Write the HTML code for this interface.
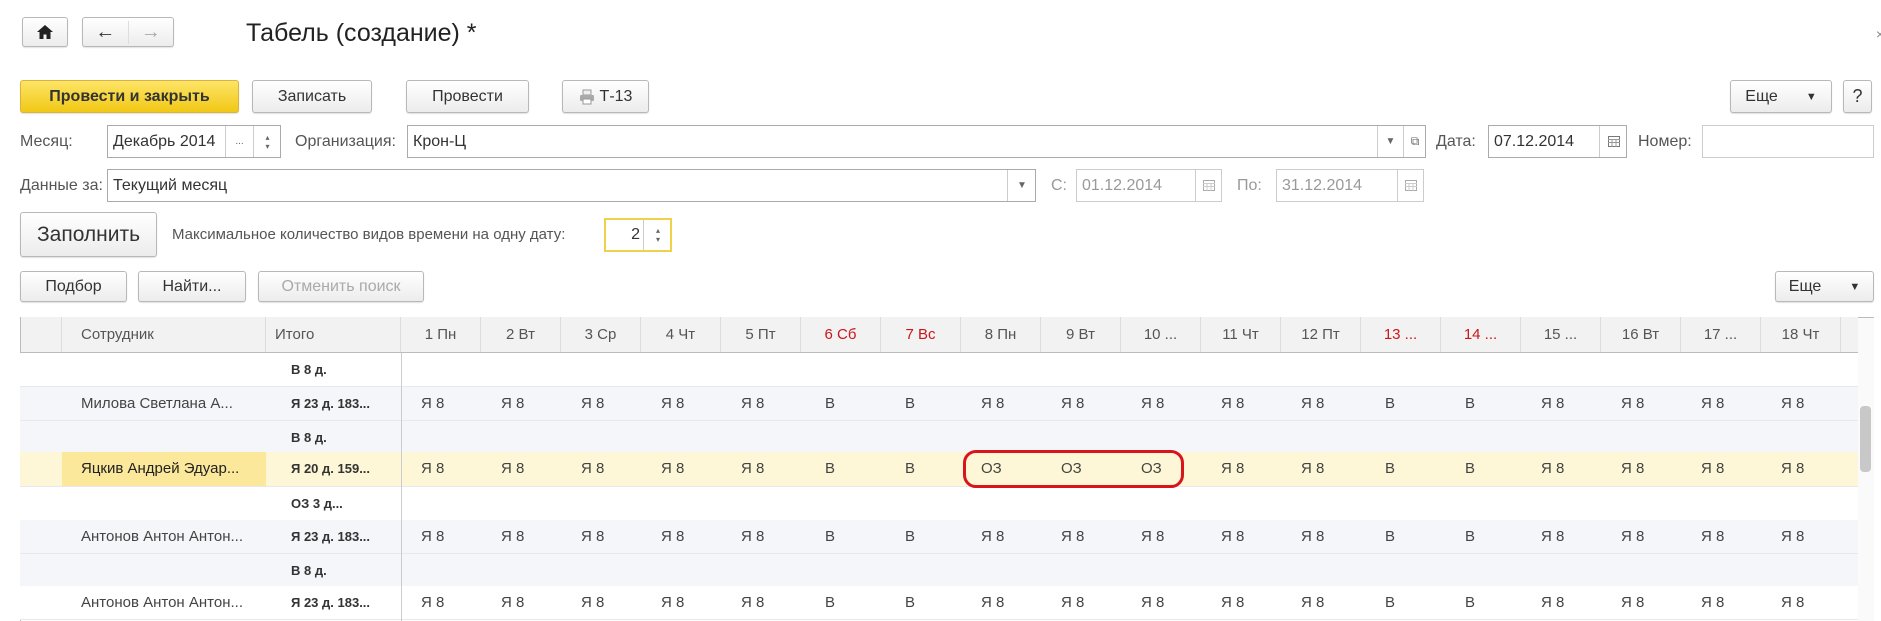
<!DOCTYPE html>
<html><head><meta charset="utf-8"><style>
*{box-sizing:border-box;margin:0;padding:0}
body{width:1881px;height:621px;overflow:hidden;background:#fff;font-family:"Liberation Sans",sans-serif;color:#333;position:relative;font-size:15px}
.a{position:absolute}
.btn{position:absolute;border:1px solid #b8b8b8;border-radius:3px;background:linear-gradient(#fff,#ececec);display:flex;align-items:center;justify-content:center;font-size:16px;color:#333;box-shadow:0 1px 1px rgba(0,0,0,.12)}
.inp{position:absolute;border:1px solid #aaa;background:#fff;font-size:16px;display:flex;align-items:center;padding-left:5px;color:#333}
.dis{border-color:#ccc;color:#999}
.lbl{position:absolute;font-size:16px;color:#555;height:33px;line-height:33px}
.sub{position:absolute;top:0;bottom:0;border-left:1px solid #ccc;display:flex;align-items:center;justify-content:center;font-size:10px;color:#666}
.row{position:absolute;left:20px;width:1838px;height:34px;border-bottom:1px solid #e6e8ee}
.row span{position:absolute;top:0;line-height:33px;font-size:15px;color:#444}
.hd{position:absolute;top:317px;height:36px;line-height:36px;font-size:15px;color:#555;background:#f2f2f2;border-right:1px solid #dcdcdc;text-align:center}
</style></head><body>
<div class="btn" style="left:22px;top:17px;width:46px;height:30px"><svg width="18" height="16" viewBox="0 0 18 16"><path d="M9 1 L1 8 L3.5 8 L3.5 15 L7.5 15 L7.5 10.5 L10.5 10.5 L10.5 15 L14.5 15 L14.5 8 L17 8 Z" fill="#222"/></svg></div>
<div class="btn" style="left:82px;top:17px;width:92px;height:30px;justify-content:flex-start"><span style="width:45px;text-align:center;font-size:20px;font-weight:bold">&larr;</span><span style="width:46px;text-align:center;font-size:20px;color:#aaa;border-left:1px solid #ddd">&rarr;</span></div>
<div class="a" style="left:246px;top:19px;font-size:25px;color:#222">Табель (создание) *</div>
<div class="a" style="left:1876px;top:26px;font-size:14px;color:#888">×</div>

<div class="btn" style="left:20px;top:80px;width:219px;height:33px;background:linear-gradient(#fde467,#f1c815);border-color:#d9b33a;font-weight:bold;color:#333">Провести и закрыть</div>
<div class="btn" style="left:252px;top:80px;width:120px;height:33px">Записать</div>
<div class="btn" style="left:406px;top:80px;width:123px;height:33px">Провести</div>
<div class="btn" style="left:562px;top:80px;width:87px;height:33px"><svg width="16" height="16" viewBox="0 0 16 16" style="margin-right:5px"><rect x="4" y="1" width="8" height="5" fill="#eee" stroke="#999"/><rect x="1" y="6" width="14" height="6" rx="1" fill="#aaa"/><rect x="4" y="10" width="8" height="5" fill="#fff" stroke="#999"/></svg>Т-13</div>
<div class="btn" style="left:1730px;top:80px;width:102px;height:33px">Еще<span style="font-size:11px;margin-left:28px">&#9660;</span></div>
<div class="btn" style="left:1843px;top:80px;width:29px;height:33px;font-size:18px">?</div>

<div class="lbl" style="left:20px;top:125px">Месяц:</div>
<div class="inp" style="left:107px;top:125px;width:174px;height:33px">Декабрь 2014<div class="sub" style="left:117px;width:28px;">...</div><div class="sub" style="left:145px;width:28px;flex-direction:column;font-size:8px">▴<br>▾</div></div>
<div class="lbl" style="left:295px;top:125px">Организация:</div>
<div class="inp" style="left:407px;top:125px;width:1019px;height:33px">Крон-Ц<div class="sub" style="left:969px;width:26px">&#9660;</div><div class="sub" style="left:995px;width:23px;font-size:12px">&#10697;</div></div>
<div class="lbl" style="left:1436px;top:125px">Дата:</div>
<div class="inp" style="left:1488px;top:125px;width:139px;height:33px">07.12.2014<div class="sub" style="left:110px;width:28px"><svg width="12" height="11"><rect x="0.5" y="0.5" width="11" height="10" fill="#fff" stroke="#777"/><path d="M0 3.5H12M0 6.5H12M4 3V11M8 3V11" stroke="#999"/></svg></div></div>
<div class="lbl" style="left:1638px;top:125px">Номер:</div>
<div class="inp" style="left:1702px;top:125px;width:172px;height:33px;border-color:#ccc"></div>

<div class="lbl" style="left:20px;top:169px">Данные за:</div>
<div class="inp" style="left:107px;top:169px;width:929px;height:33px">Текущий месяц<div class="sub" style="left:899px;width:29px">&#9660;</div></div>
<div class="lbl" style="left:1051px;top:169px;color:#999">С:</div>
<div class="inp dis" style="left:1076px;top:169px;width:146px;height:33px">01.12.2014<div class="sub" style="left:118px;width:27px"><svg width="12" height="11"><rect x="0.5" y="0.5" width="11" height="10" fill="#fff" stroke="#aaa"/><path d="M0 3.5H12M0 6.5H12M4 3V11M8 3V11" stroke="#ccc"/></svg></div></div>
<div class="lbl" style="left:1237px;top:169px;color:#999">По:</div>
<div class="inp dis" style="left:1276px;top:169px;width:148px;height:33px">31.12.2014<div class="sub" style="left:120px;width:27px"><svg width="12" height="11"><rect x="0.5" y="0.5" width="11" height="10" fill="#fff" stroke="#aaa"/><path d="M0 3.5H12M0 6.5H12M4 3V11M8 3V11" stroke="#ccc"/></svg></div></div>

<div class="btn" style="left:20px;top:212px;width:137px;height:45px;font-size:21px">Заполнить</div>
<div class="lbl" style="left:172px;top:218px;font-size:15px;height:34px;line-height:34px">Максимальное количество видов времени на одну дату:</div>
<div class="inp" style="left:604px;top:218px;width:68px;height:34px;border:2px solid #f0d24a;justify-content:flex-end;padding-right:30px">2<div class="sub" style="left:37px;width:29px;flex-direction:column;font-size:8px">▴<br>▾</div></div>

<div class="btn" style="left:20px;top:271px;width:107px;height:31px">Подбор</div>
<div class="btn" style="left:138px;top:271px;width:108px;height:31px">Найти...</div>
<div class="btn" style="left:258px;top:271px;width:166px;height:31px;color:#aaa">Отменить поиск</div>
<div class="btn" style="left:1775px;top:271px;width:99px;height:31px">Еще<span style="font-size:11px;margin-left:28px">&#9660;</span></div>

<div class="a" style="left:20px;top:317px;width:1854px;height:304px;border:1px solid #bbb;border-bottom:none"></div>
<div class="hd" style="left:21px;width:41px"></div>
<div class="hd" style="left:62px;width:204px;text-align:left;padding-left:19px">Сотрудник</div>
<div class="hd" style="left:266px;width:135px;text-align:left;padding-left:9px">Итого</div>
<div class="hd" style="left:401px;width:80px">1 Пн</div><div class="hd" style="left:481px;width:80px">2 Вт</div><div class="hd" style="left:561px;width:80px">3 Ср</div><div class="hd" style="left:641px;width:80px">4 Чт</div><div class="hd" style="left:721px;width:80px">5 Пт</div><div class="hd" style="left:801px;width:80px;color:#c8161d">6 Сб</div><div class="hd" style="left:881px;width:80px;color:#c8161d">7 Вс</div><div class="hd" style="left:961px;width:80px">8 Пн</div><div class="hd" style="left:1041px;width:80px">9 Вт</div><div class="hd" style="left:1121px;width:80px">10 ...</div><div class="hd" style="left:1201px;width:80px">11 Чт</div><div class="hd" style="left:1281px;width:80px">12 Пт</div><div class="hd" style="left:1361px;width:80px;color:#c8161d">13 ...</div><div class="hd" style="left:1441px;width:80px;color:#c8161d">14 ...</div><div class="hd" style="left:1521px;width:80px">15 ...</div><div class="hd" style="left:1601px;width:80px">16 Вт</div><div class="hd" style="left:1681px;width:80px">17 ...</div><div class="hd" style="left:1761px;width:80px">18 Чт</div><div class="hd" style="left:1841px;width:17px;border:none"></div>
<div class="a" style="left:20px;top:352px;width:1838px;height:1px;background:#bbb"></div>
<div class="a" style="left:1858px;top:318px;width:16px;height:303px;background:#fafafa"></div>
<div class="a" style="left:1860px;top:406px;width:11px;height:66px;background:#c8c8c8;border-radius:4px"></div>

<div class="row" style="top:353px;background:#fff"><span style="left:271px;font-weight:bold;font-size:13px;color:#333">В 8 д.</span></div>
<div class="row" style="top:387px;background:#f5f6f9"><span style="left:61px">Милова Светлана А...</span><span style="left:271px;font-weight:bold;font-size:13px;color:#333">Я 23 д. 183...</span>
<span style="left:401px">Я 8</span><span style="left:481px">Я 8</span><span style="left:561px">Я 8</span><span style="left:641px">Я 8</span><span style="left:721px">Я 8</span><span style="left:805px">В</span><span style="left:885px">В</span><span style="left:961px">Я 8</span><span style="left:1041px">Я 8</span><span style="left:1121px">Я 8</span><span style="left:1201px">Я 8</span><span style="left:1281px">Я 8</span><span style="left:1365px">В</span><span style="left:1445px">В</span><span style="left:1521px">Я 8</span><span style="left:1601px">Я 8</span><span style="left:1681px">Я 8</span><span style="left:1761px">Я 8</span></div>
<div class="row" style="top:421px;background:#f5f6f9"><span style="left:271px;font-weight:bold;font-size:13px;color:#333">В 8 д.</span></div>
<div class="row" style="top:452px;height:35px;background:#fdf7d7"><div class="a" style="left:42px;top:0;width:204px;height:34px;background:#fbe89a"></div><span style="left:61px;color:#222">Яцкив Андрей Эдуар...</span><span style="left:271px;font-weight:bold;font-size:13px;color:#333">Я 20 д. 159...</span>
<span style="left:401px">Я 8</span><span style="left:481px">Я 8</span><span style="left:561px">Я 8</span><span style="left:641px">Я 8</span><span style="left:721px">Я 8</span><span style="left:805px">В</span><span style="left:885px">В</span><span style="left:961px">ОЗ</span><span style="left:1041px">ОЗ</span><span style="left:1121px">ОЗ</span><span style="left:1201px">Я 8</span><span style="left:1281px">Я 8</span><span style="left:1365px">В</span><span style="left:1445px">В</span><span style="left:1521px">Я 8</span><span style="left:1601px">Я 8</span><span style="left:1681px">Я 8</span><span style="left:1761px">Я 8</span></div>
<div class="row" style="top:487px;background:#fff"><span style="left:271px;font-weight:bold;font-size:13px;color:#333">ОЗ 3 д...</span></div>
<div class="row" style="top:520px;background:#f5f6f9"><span style="left:61px">Антонов Антон Антон...</span><span style="left:271px;font-weight:bold;font-size:13px;color:#333">Я 23 д. 183...</span>
<span style="left:401px">Я 8</span><span style="left:481px">Я 8</span><span style="left:561px">Я 8</span><span style="left:641px">Я 8</span><span style="left:721px">Я 8</span><span style="left:805px">В</span><span style="left:885px">В</span><span style="left:961px">Я 8</span><span style="left:1041px">Я 8</span><span style="left:1121px">Я 8</span><span style="left:1201px">Я 8</span><span style="left:1281px">Я 8</span><span style="left:1365px">В</span><span style="left:1445px">В</span><span style="left:1521px">Я 8</span><span style="left:1601px">Я 8</span><span style="left:1681px">Я 8</span><span style="left:1761px">Я 8</span></div>
<div class="row" style="top:554px;background:#f5f6f9"><span style="left:271px;font-weight:bold;font-size:13px;color:#333">В 8 д.</span></div>
<div class="row" style="top:586px;background:#fff"><span style="left:61px">Антонов Антон Антон...</span><span style="left:271px;font-weight:bold;font-size:13px;color:#333">Я 23 д. 183...</span>
<span style="left:401px">Я 8</span><span style="left:481px">Я 8</span><span style="left:561px">Я 8</span><span style="left:641px">Я 8</span><span style="left:721px">Я 8</span><span style="left:805px">В</span><span style="left:885px">В</span><span style="left:961px">Я 8</span><span style="left:1041px">Я 8</span><span style="left:1121px">Я 8</span><span style="left:1201px">Я 8</span><span style="left:1281px">Я 8</span><span style="left:1365px">В</span><span style="left:1445px">В</span><span style="left:1521px">Я 8</span><span style="left:1601px">Я 8</span><span style="left:1681px">Я 8</span><span style="left:1761px">Я 8</span></div>
<div class="a" style="left:401px;top:353px;width:1px;height:268px;background:#ccc"></div>
<div class="a" style="left:963px;top:450px;width:221px;height:38px;border:3px solid #d8141c;border-radius:13px"></div>
</body></html>
